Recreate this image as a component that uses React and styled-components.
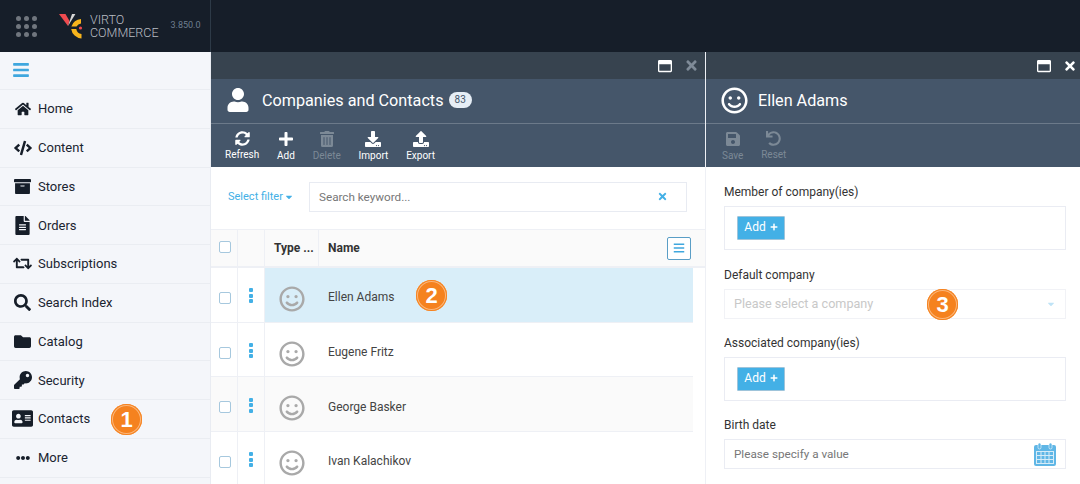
import React from "react";
import styled, { createGlobalStyle } from "styled-components";
import {
  FaHome,
  FaCode,
  FaArchive,
  FaFileAlt,
  FaRetweet,
  FaSearch,
  FaFolder,
  FaKey,
  FaAddressCard,
  FaEllipsisH,
  FaUser,
  FaSyncAlt,
  FaPlus,
  FaTrashAlt,
  FaDownload,
  FaUpload,
  FaSave,
  FaUndo,
  FaTimes,
  FaBars,
  FaCaretDown,
  FaRegSmile,
  FaRegWindowMaximize,
} from "react-icons/fa";

const GlobalStyle = createGlobalStyle`
  html, body {
    margin: 0;
    padding: 0;
    background: #fff;
    overflow: hidden;
  }
  * {
    box-sizing: border-box;
  }
  body {
    font-family: Roboto, "Liberation Sans", sans-serif;
    color: #333;
  }
`;

const navItems = [
  { label: "Home", icon: <FaHome size={16} /> },
  { label: "Content", icon: <FaCode size={18} /> },
  { label: "Stores", icon: <FaArchive size={17} /> },
  { label: "Orders", icon: <FaFileAlt size={19} /> },
  { label: "Subscriptions", icon: <FaRetweet size={19} /> },
  { label: "Search Index", icon: <FaSearch size={17} /> },
  { label: "Catalog", icon: <FaFolder size={17} /> },
  { label: "Security", icon: <FaKey size={18} /> },
  { label: "Contacts", icon: <FaAddressCard size={21} /> },
  { label: "More", icon: <FaEllipsisH size={14} /> },
];

const contacts = ["Ellen Adams", "Eugene Fritz", "George Basker", "Ivan Kalachikov"];

function Logo() {
  return (
    <svg width="24" height="25" viewBox="0 0 24 25">
      <path d="M0 0h6.5l4 7-1.5 5z" fill="#ee4a4f" />
      <path d="M9 12l4-12h3.4z" fill="#d6d6d6" />
      <path d="M22 5a11 11 0 0 0-9.6 7.5h5.1a6 6 0 0 1 4.5-3z" fill="#f7b41c" />
      <path d="M12.2 15h5.1a6 6 0 0 0 5.2 5v4.5A11 11 0 0 1 12.2 15z" fill="#f7b41c" />
      <circle cx="21.5" cy="14" r="1.6" fill="#ee4a4f" />
    </svg>
  );
}

function CalendarIcon() {
  return (
    <svg width="22" height="23" viewBox="0 0 22 23">
      <rect y="2" width="22" height="21" rx="2" fill="#5fb6e6" />
      <rect x="4" width="3" height="6" rx="1.5" fill="#5fb6e6" stroke="#fff" strokeWidth="0.6" />
      <rect x="15" width="3" height="6" rx="1.5" fill="#5fb6e6" stroke="#fff" strokeWidth="0.6" />
      <path
        d="M2 8.5h18M2 12.5h18M2 16.5h18M2 20.5h18M2.5 8v13M7 8v13M11 8v13M15 8v13M19.5 8v13"
        stroke="#fff"
        strokeWidth="1"
        opacity="0.75"
      />
    </svg>
  );
}

function App() {
  return (
    <Page>
      <GlobalStyle />
      <TopBar>
        <Brand>
          <AppsGrid>
            {Array.from({ length: 9 }).map((_, i) => (
              <i key={i} />
            ))}
          </AppsGrid>
          <LogoMark>
            <Logo />
          </LogoMark>
          <BrandName>
            VIRTO
            <br />
            COMMERCE
          </BrandName>
          <Version>3.850.0</Version>
        </Brand>
      </TopBar>

      <Main>
        <Sidebar>
          <MenuRow>
            <FaBars size={18} />
          </MenuRow>
          {navItems.map((item) => (
            <NavRow key={item.label}>
              <NavIcon>{item.icon}</NavIcon>
              {item.label}
            </NavRow>
          ))}
        </Sidebar>

        <ListBlade>
          <BladeStrip $right={6}>
            <FaRegWindowMaximize size={14} color="#fff" />
            <FaTimes size={15} color="#7f8b98" />
          </BladeStrip>
          <BladeHead>
            <FaUser size={24} color="#fff" />
            <BladeTitle $gap={12}>Companies and Contacts</BladeTitle>
            <Count>83</Count>
          </BladeHead>
          <Toolbar $left={14}>
            <ToolButton>
              <FaSyncAlt size={15} />
              Refresh
            </ToolButton>
            <ToolButton>
              <FaPlus size={16} />
              Add
            </ToolButton>
            <ToolButton $off>
              <FaTrashAlt size={16} />
              Delete
            </ToolButton>
            <ToolButton>
              <FaDownload size={16} />
              Import
            </ToolButton>
            <ToolButton>
              <FaUpload size={16} />
              Export
            </ToolButton>
          </Toolbar>

          <FilterRow>
            <FilterLink>
              Select filter
              <FaCaretDown size={10} />
            </FilterLink>
            <SearchBox>
              <span>Search keyword...</span>
              <FaTimes size={11} color="#43b0e6" />
            </SearchBox>
          </FilterRow>

          <HeadRow>
            <HeadCheckCell>
              <Check />
            </HeadCheckCell>
            <Cell />
            <HeadCell>Type ...</HeadCell>
            <NameHead>
              Name
              <ColumnsButton>
                <FaBars size={12} />
              </ColumnsButton>
            </NameHead>
          </HeadRow>
          {contacts.map((name, i) => (
            <Row key={name} $selected={i === 0} $striped={i === 2}>
              <CheckCell>
                <Check />
              </CheckCell>
              <KebabCell>
                <Kebab>
                  <i />
                  <i />
                  <i />
                </Kebab>
              </KebabCell>
              <TypeCell>
                <FaRegSmile size={26} />
              </TypeCell>
              <NameCell>{name}</NameCell>
            </Row>
          ))}
        </ListBlade>

        <DetailBlade>
          <BladeStrip $right={3}>
            <FaRegWindowMaximize size={14} color="#fff" />
            <FaTimes size={14} color="#fff" />
          </BladeStrip>
          <BladeHead>
            <FaRegSmile size={27} color="#fff" />
            <BladeTitle $gap={10}>Ellen Adams</BladeTitle>
          </BladeHead>
          <Toolbar $left={16}>
            <ToolButton $off>
              <FaSave size={16} />
              Save
            </ToolButton>
            <ToolButton $off>
              <FaUndo size={15} />
              Reset
            </ToolButton>
          </Toolbar>

          <Form>
            <Label>Member of company(ies)</Label>
            <AddBox>
              <AddButton>
                Add <FaPlus size={8} />
              </AddButton>
            </AddBox>
            <Label>Default company</Label>
            <SelectBox>
              Please select a company
              <FaCaretDown size={10} color="#bfe3f6" />
            </SelectBox>
            <Label>Associated company(ies)</Label>
            <AddBox>
              <AddButton>
                Add <FaPlus size={8} />
              </AddButton>
            </AddBox>
            <Label>Birth date</Label>
            <DateBox>
              Please specify a value
              <CalendarIcon />
            </DateBox>
          </Form>
        </DetailBlade>
      </Main>

      <Marker $x={111} $y={404}>1</Marker>
      <Marker $x={416} $y={280}>2</Marker>
      <Marker $x={927} $y={289}>3</Marker>
    </Page>
  );
}

const Page = styled.div`
  position: relative;
  width: 1080px;
  height: 484px;
  overflow: hidden;
  background: #fff;
`;

const TopBar = styled.header`
  height: 52px;
  background: #161e29;
`;

const Brand = styled.div`
  width: 211px;
  height: 52px;
  display: flex;
  align-items: center;
  padding-left: 16px;
  border-right: 1px solid #2d3a47;
`;

const AppsGrid = styled.div`
  display: grid;
  grid-template-columns: repeat(3, 5px);
  gap: 3px;

  i {
    width: 5px;
    height: 5px;
    border-radius: 50%;
    background: #70767e;
  }
`;

const LogoMark = styled.div`
  display: flex;
  margin-left: 22px;
`;

const BrandName = styled.div`
  margin-left: 7px;
  font-size: 12.5px;
  line-height: 13px;
  font-weight: 300;
  color: #b9bdc3;
`;

const Version = styled.div`
  margin: 0 0 2px 12px;
  font-size: 9px;
  color: #6f7f90;
`;

const Main = styled.main`
  display: flex;
  height: 432px;
`;

const Sidebar = styled.nav`
  width: 211px;
  flex: none;
  background: #f4f6fa;
  border-right: 1px solid #e9ecf2;
`;

const MenuRow = styled.div`
  height: 38px;
  display: flex;
  align-items: center;
  padding: 0 0 1px 12px;
  color: #3fa7de;
  border-bottom: 1px solid #eaedf2;
`;

const NavRow = styled.div`
  height: 38.75px;
  display: flex;
  align-items: center;
  padding-left: 12px;
  font-size: 13px;
  font-weight: 400;
  color: #1a2430;
  border-bottom: 1px solid #eaedf2;
`;

const NavIcon = styled.span`
  width: 26px;
  display: flex;
  align-items: center;
  justify-content: center;
  padding-right: 5px;
  color: #161e29;
`;

const ListBlade = styled.section`
  width: 495px;
  flex: none;
  border-right: 1px solid #eef0f5;
`;

const DetailBlade = styled.section`
  flex: 1;
  min-width: 0;
`;

const BladeStrip = styled.div`
  height: 27px;
  display: flex;
  align-items: center;
  justify-content: flex-end;
  gap: 12px;
  padding-right: ${(p) => p.$right}px;
  background: #37434f;
`;

const BladeHead = styled.div`
  height: 45px;
  display: flex;
  align-items: center;
  padding: 0 0 2px 15px;
  background: #45566a;
  border-bottom: 1px solid #6c7a8a;
`;

const BladeTitle = styled.div`
  margin-left: ${(p) => p.$gap}px;
  font-size: 16.2px;
  color: #fff;
`;

const Count = styled.span`
  margin-left: 5px;
  padding: 0 6px;
  height: 16px;
  border-radius: 8px;
  font-size: 10px;
  line-height: 16px;
  color: #45566a;
  background: #e6eef6;
`;

const Toolbar = styled.div`
  height: 43px;
  display: flex;
  align-items: flex-start;
  gap: 17.8px;
  padding: 7px 0 0 ${(p) => p.$left}px;
  background: #45566a;
`;

const ToolButton = styled.div`
  display: flex;
  flex-direction: column;
  align-items: center;
  gap: 3px;
  font-size: 10px;
  line-height: 12px;
  color: ${(p) => (p.$off ? "#7c8996" : "#fff")};
`;

const FilterRow = styled.div`
  height: 62px;
  display: flex;
  align-items: center;
  padding: 0 18px 3px 17px;
`;

const FilterLink = styled.div`
  width: 81px;
  display: flex;
  align-items: center;
  gap: 1px;
  font-size: 11px;
  color: #43b0e6;
`;

const SearchBox = styled.div`
  flex: 1;
  height: 30px;
  display: flex;
  align-items: center;
  justify-content: space-between;
  padding: 0 18px 0 9px;
  font-size: 11.7px;
  color: #777;
  border: 1px solid #e8ebf2;
`;

const Cell = styled.div`
  display: flex;
  align-items: center;
  justify-content: center;
  border-right: 1px solid #eef0f5;
`;

const HeadRow = styled.div`
  height: 39px;
  display: grid;
  grid-template-columns: 27px 27px 54px 1fr;
  background: #fafafa;
  border-top: 1px solid #eef0f5;
  border-bottom: 2px solid #eef0f5;
`;

const HeadCheckCell = styled(Cell)`
  padding-bottom: 2px;
`;

const HeadCell = styled(Cell)`
  justify-content: flex-start;
  padding-left: 9px;
  font-size: 12px;
  font-weight: 700;
  white-space: nowrap;
`;

const NameHead = styled(HeadCell)`
  justify-content: space-between;
  padding: 0 14px 0 9px;
  border-right: 0;
`;

const ColumnsButton = styled.div`
  width: 24px;
  height: 23px;
  display: flex;
  align-items: center;
  justify-content: center;
  color: #3fa7de;
  border: 1px solid #5a9ec6;
  border-radius: 2px;
  background: #fff;
`;

const Row = styled.div`
  width: 482px;
  height: 54.7px;
  display: grid;
  grid-template-columns: 27px 27px 54px 1fr;
  background: ${(p) => (p.$selected ? "#d9eef9" : p.$striped ? "#fafafa" : "#fff")};
  border-bottom: 1px solid #eef0f5;

  ${Cell}:nth-child(-n + 2) {
    background: ${(p) => (p.$striped ? "#fafafa" : "#fff")};
  }
`;

const CheckCell = styled(Cell)`
  padding-top: 6px;
`;

const KebabCell = styled(Cell)`
  padding-top: 2px;
`;

const Kebab = styled.div`
  display: flex;
  flex-direction: column;
  gap: 1.5px;

  i {
    width: 4.5px;
    height: 4px;
    border-radius: 1px;
    background: #43b0e6;
  }
`;

const TypeCell = styled(Cell)`
  padding-top: 8px;
  color: #a9a9a9;
  border-right: 0;
`;

const NameCell = styled.div`
  display: flex;
  align-items: center;
  padding: 5px 0 0 9px;
  font-size: 12px;
  color: #444;
`;

const Check = styled.span`
  width: 12px;
  height: 12px;
  margin-left: 2px;
  background: #fff;
  border: 1px solid #a6c8de;
  border-radius: 2px;
`;

const Form = styled.div`
  padding: 18px 14px 0 18px;
`;

const Label = styled.div`
  height: 15px;
  margin-bottom: 6px;
  font-size: 12px;
  line-height: 15px;
  color: #333;
`;

const AddBox = styled.div`
  height: 44px;
  margin-bottom: 17.5px;
  padding: 9px 12px;
  border: 1px solid #eaecf3;
`;

const AddButton = styled.div`
  width: 48px;
  height: 24px;
  display: flex;
  align-items: center;
  justify-content: center;
  gap: 4px;
  padding-bottom: 2px;
  font-size: 12px;
  color: #fff;
  background: #43b0e6;
  border: 1px solid #9fc4da;
  border-radius: 1px;
`;

const SelectBox = styled.div`
  height: 30px;
  margin-bottom: 17px;
  display: flex;
  align-items: center;
  justify-content: space-between;
  padding: 0 9px;
  font-size: 12.6px;
  color: #c8c8c8;
  border: 1px solid #f1f2f6;
`;

const DateBox = styled(SelectBox)`
  font-size: 11.7px;
  color: #777;
  border-color: #eaecf3;
`;

const Marker = styled.div`
  position: absolute;
  left: ${(p) => p.$x}px;
  top: ${(p) => p.$y}px;
  width: 31px;
  height: 31px;
  display: flex;
  align-items: center;
  justify-content: center;
  font-family: "Liberation Sans", sans-serif;
  font-size: 22px;
  font-weight: 700;
  color: #fff;
  background: #f5821f;
  border-radius: 50%;
  box-shadow: inset 0 0 0 1px #f5821f, inset 0 0 0 2px #fbb67a;
`;

export default App;
